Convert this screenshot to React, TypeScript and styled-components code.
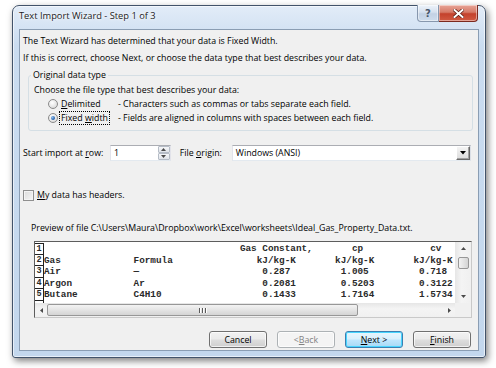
import React from "react";
import styled, { createGlobalStyle } from "styled-components";

const Global = createGlobalStyle`
  html, body { margin: 0; padding: 0; background: #ffffff; }
  body {
    width: 496px; height: 368px; overflow: hidden;
    font-family: "Open Sans", "Noto Sans", sans-serif;
    font-size: 8.8px; color: #000;
  }
`;

const Page = styled.div`
  padding: 5px 0 0 12px;
`;

const Window = styled.div`
  width: 474px;
  height: 353px;
  box-sizing: border-box;
  border: 1px solid #42536a;
  border-radius: 7px 7px 3px 3px;
  background: linear-gradient(#e2ecf8, #cadcf0 40px, #c3d7ed);
  box-shadow: 2px 3px 7px rgba(0, 0, 0, 0.5), inset 0 0 0 1px rgba(255,255,255,0.6);
  display: flex;
  flex-direction: column;
`;

const TitleBar = styled.div`
  height: 23px;
  display: flex;
  justify-content: space-between;
  align-items: flex-start;
  padding: 0 7px 0 6px;
`;

const Title = styled.div`
  padding-top: 3px;
  line-height: 14px;
  font-size: 9.3px;
  color: #1a1a1a;
  text-shadow: 0 0 4px #fff, 0 0 2px #fff;
`;

const CaptionButtons = styled.div`
  display: flex;
  margin-top: -1px;
`;

const CaptionButton = styled.div<{ $close?: boolean }>`
  height: 17px;
  width: ${(p) => (p.$close ? 39 : 22)}px;
  box-sizing: border-box;
  display: flex;
  align-items: center;
  justify-content: center;
  border: 1px solid ${(p) => (p.$close ? "#7b2a20" : "#8797ad")};
  border-top: none;
  border-left: ${(p) => (p.$close ? "none" : "1px solid #8797ad")};
  border-radius: ${(p) => (p.$close ? "0 0 4px 0" : "0 0 0 4px")};
  background: ${(p) =>
    p.$close
      ? "linear-gradient(#e8a597, #d67a68 45%, #c4412c 55%, #d15a43)"
      : "linear-gradient(#eef3fa, #d5e0ee 45%, #c2d1e4 55%, #cfdcec)"};
  box-shadow: inset 0 0 0 1px rgba(255,255,255,0.45);
  color: #48566a;
  font-family: "DejaVu Sans", sans-serif;
  font-weight: bold;
  font-size: 10px;
`;

const Client = styled.div`
  flex: 1;
  margin: 0 6px 6px 6px;
  border: 1px solid #8a9db3;
  background: #f0f0f0;
  display: flex;
  flex-direction: column;
  padding: 0 7px 0 3px;
`;

const Line = styled.div<{ $top: number; $indent?: number }>`
  line-height: 14px;
  height: 14px;
  white-space: nowrap;
  margin-top: ${(p) => p.$top}px;
  margin-left: ${(p) => p.$indent ?? 0}px;
`;

const U = styled.span`
  text-decoration: underline;
  text-underline-offset: 1px;
`;

const Group = styled.fieldset`
  margin: 3px 0 0 5px;
  width: 445px;
  box-sizing: border-box;
  border: 1px solid #d5dfe5;
  border-radius: 3px;
  padding: 1px 0 5px 5px;
  min-width: 0;
`;

const Legend = styled.legend`
  padding: 0 2px;
  margin-left: -3px;
  line-height: 14px;
  font-size: 8.8px;
`;

const RadioRow = styled.div`
  display: flex;
  align-items: center;
  height: 14px;
  padding-left: 14px;
`;

const Radio = styled.span<{ $checked?: boolean }>`
  width: 10px;
  height: 10px;
  flex: none;
  box-sizing: border-box;
  border-radius: 50%;
  border: 1px solid #8a8a8a;
  background: radial-gradient(circle at 40% 35%, #ffffff, #e4e4e4 60%, #cfcfcf);
  display: flex;
  align-items: center;
  justify-content: center;
  &::after {
    content: "";
    display: ${(p) => (p.$checked ? "block" : "none")};
    width: 4px;
    height: 4px;
    border-radius: 50%;
    background: radial-gradient(circle at 35% 35%, #8fc0f0, #1f5aa6 70%);
  }
`;

const RadioLabel = styled.span<{ $focus?: boolean }>`
  width: 51px;
  flex: none;
  box-sizing: border-box;
  line-height: 12px;
  padding: 0 1px;
  border: 1px ${(p) => (p.$focus ? "dotted #000" : "solid transparent")};
  margin-left: 1px;
`;

const Desc = styled.span`
  margin-left: 8px;
  white-space: nowrap;
`;

const ImportRow = styled.div`
  display: flex;
  align-items: center;
  height: 16px;
  margin-top: 14px;
`;

const FieldLabel = styled.span<{ $w: number; $pad?: number }>`
  width: ${(p) => p.$w}px;
  padding-left: ${(p) => p.$pad ?? 0}px;
  box-sizing: border-box;
  flex: none;
  white-space: nowrap;
`;

const SpinBox = styled.div`
  width: 61px;
  height: 16px;
  box-sizing: border-box;
  border: 1px solid #abadb3;
  border-color: #abadb3 #e2e3ea #e3e9ef #e2e3ea;
  background: #fff;
  display: flex;
  align-items: stretch;
`;

const SpinValue = styled.span`
  flex: 1;
  padding-left: 3px;
  line-height: 14px;
`;

const SpinButtons = styled.div`
  width: 12px;
  display: flex;
  flex-direction: column;
`;

const SpinButton = styled.div`
  flex: 1;
  box-sizing: border-box;
  border: 1px solid #b5bcc6;
  border-radius: 1px;
  background: linear-gradient(#f6f7f9, #dfe3e8);
  display: flex;
  align-items: center;
  justify-content: center;
`;

const Combo = styled.div`
  width: 240px;
  height: 16px;
  box-sizing: border-box;
  border: 1px solid #a9a9a9;
  border-color: #abadb3 #dbdfe6 #e3e9ef #e2e3ea;
  background: #fff;
  display: flex;
  align-items: stretch;
`;

const ComboValue = styled.span`
  flex: 1;
  padding-left: 3px;
  line-height: 14px;
`;

const DropButton = styled.div`
  width: 14px;
  box-sizing: border-box;
  border: 1px solid #7f7f7f;
  border-color: #fff #6a6a6a #6a6a6a #fff;
  box-shadow: inset -1px -1px 0 #a0a0a0;
  background: linear-gradient(#f4f4f4, #dcdcdc);
  display: flex;
  align-items: center;
  justify-content: center;
`;

const CheckRow = styled.div`
  display: flex;
  align-items: center;
  height: 14px;
  margin-top: 27px;
`;

const CheckBox = styled.span`
  width: 11px;
  height: 11px;
  box-sizing: border-box;
  border: 1px solid #8f8f8f;
  background: linear-gradient(135deg, #dcdcdc, #f6f6f6);
  box-shadow: inset 0 0 0 1px #f4f4f4;
  margin-right: 3px;
`;

const PreviewBox = styled.div`
  margin: 6px 0 0 11px;
  width: 438px;
  height: 77px;
  box-sizing: border-box;
  border: 1px solid #5d5d5d;
  border-color: #5d5d5d #c9c9c9 #c9c9c9 #5d5d5d;
  background: #fff;
  display: flex;
  flex-direction: column;
`;

const PreviewMain = styled.div`
  flex: 1;
  display: flex;
  min-height: 0;
`;

const DataArea = styled.div`
  flex: 1;
  overflow: hidden;
  padding-top: 1px;
  font-family: "Liberation Mono", "Courier New", monospace;
  font-size: 9.33px;
  font-weight: bold;
  color: #2a2a2a;
`;

const DataRow = styled.div`
  height: 11.5px;
  display: flex;
  align-items: stretch;
`;

const RulerCell = styled.div<{ $first?: boolean }>`
  width: 9px;
  flex: none;
  box-sizing: border-box;
  border-right: 1px solid #222;
  border-bottom: 1px solid #222;
  border-top: ${(p) => (p.$first ? "1px solid #222" : "none")};
  line-height: 10px;
  text-align: center;
  font-size: 8.5px;
`;

const RowText = styled.div`
  white-space: pre;
  line-height: 12px;
  padding-left: 0;
`;

const VScroll = styled.div`
  width: 16px;
  flex: none;
  background: linear-gradient(90deg, #e6e6e6, #f4f4f4 40%, #f0f0f0);
  display: flex;
  flex-direction: column;
  align-items: center;
`;

const ArrowBox = styled.div`
  height: 13px;
  width: 100%;
  display: flex;
  align-items: center;
  justify-content: center;
`;

const VThumb = styled.div`
  width: 11px;
  height: 12px;
  box-sizing: border-box;
  border: 1px solid #979797;
  border-radius: 2px;
  background: linear-gradient(90deg, #f3f3f3, #e4e4e4 50%, #d4d4d4);
  margin-top: 2px;
`;

const Spacer = styled.div`
  flex: 1;
`;

const HScrollRow = styled.div`
  height: 14px;
  display: flex;
  flex: none;
`;

const HScroll = styled.div`
  flex: 1;
  display: flex;
  align-items: center;
  background: linear-gradient(#e6e6e6, #f4f4f4 40%, #f0f0f0);
`;

const HArrow = styled.div`
  width: 12px;
  height: 100%;
  display: flex;
  align-items: center;
  justify-content: center;
`;

const HThumb = styled.div`
  width: 311px;
  height: 12px;
  box-sizing: border-box;
  border: 1px solid #979797;
  border-radius: 2px;
  background: linear-gradient(#f3f3f3, #e4e4e4 50%, #d4d4d4);
  display: flex;
  align-items: center;
  justify-content: center;
  gap: 1px;
`;

const Grip = styled.span`
  width: 1px;
  height: 5px;
  background: #5a5a5a;
  box-shadow: 1px 0 0 #fff;
  margin-right: 1px;
`;

const Corner = styled.div`
  width: 16px;
  background: #f0f0f0;
`;

const ButtonRow = styled.div`
  display: flex;
  justify-content: flex-end;
  gap: 10px;
  margin-top: 13px;
`;

const Button = styled.div<{ $disabled?: boolean; $default?: boolean }>`
  width: 58px;
  height: 17px;
  box-sizing: border-box;
  border: 1px solid ${(p) => (p.$disabled ? "#adb2b5" : p.$default ? "#3c7fb1" : "#707070")};
  border-radius: 3px;
  background: ${(p) =>
    p.$disabled
      ? "#f4f4f4"
      : p.$default
      ? "linear-gradient(#eaf6fd, #d9f0fc 45%, #bee6fd 55%, #a7d9f5)"
      : "linear-gradient(#f2f2f2, #ebebeb 45%, #dddddd 55%, #cfcfcf)"};
  box-shadow: inset 0 0 0 1px ${(p) => (p.$default ? "#48d5fe" : "rgba(255,255,255,0.7)")};
  color: ${(p) => (p.$disabled ? "#838383" : "#000")};
  display: flex;
  align-items: center;
  justify-content: center;
  line-height: 14px;
`;

type Field = [number, string];
const build = (fields: Field[]) => {
  let s = "";
  for (const [col, txt] of fields) {
    while (s.length < col) s += " ";
    s += txt;
  }
  return s;
};

const rows: string[] = [
  build([[35, "Gas Constant,"], [55, "cp"], [69, "cv"]]),
  build([[0, "Gas"], [16, "Formula"], [38, "kJ/kg-K"], [52, "kJ/kg-K"], [66, "kJ/kg-K"]]),
  build([[0, "Air"], [16, "—"], [39, "0.287"], [53, "1.005"], [67, "0.718"]]),
  build([[0, "Argon"], [16, "Ar"], [39, "0.2081"], [53, "0.5203"], [67, "0.3122"]]),
  build([[0, "Butane"], [16, "C4H10"], [39, "0.1433"], [53, "1.7164"], [67, "1.5734"]]),
  "",
];

const Tri = ({ dir, size = 5, color = "#4a4a4a" }: { dir: "up" | "down" | "left" | "right"; size?: number; color?: string }) => {
  const h = size;
  const pts =
    dir === "up"
      ? `0,${h * 0.6} ${h / 2},0 ${h},${h * 0.6}`
      : dir === "down"
      ? `0,0 ${h / 2},${h * 0.6} ${h},0`
      : dir === "left"
      ? `${h * 0.6},0 0,${h / 2} ${h * 0.6},${h}`
      : `0,0 ${h * 0.6},${h / 2} 0,${h}`;
  const w = dir === "up" || dir === "down" ? h : h * 0.6;
  const hh = dir === "up" || dir === "down" ? h * 0.6 : h;
  return (
    <svg width={w} height={hh} viewBox={`0 0 ${w} ${hh}`}>
      <polygon points={pts} fill={color} />
    </svg>
  );
};

export default function App() {
  return (
    <>
      <Global />
      <Page>
        <Window>
          <TitleBar>
            <Title>Text Import Wizard - Step 1 of 3</Title>
            <CaptionButtons>
              <CaptionButton>?</CaptionButton>
              <CaptionButton $close>
                <svg width="11" height="9" viewBox="0 0 11 9">
                  <path d="M1.5 1 L9.5 8 M9.5 1 L1.5 8" stroke="#5a1a12" strokeWidth="3.4" strokeLinecap="square" />
                  <path d="M1.5 1 L9.5 8 M9.5 1 L1.5 8" stroke="#ffffff" strokeWidth="2" strokeLinecap="square" />
                </svg>
              </CaptionButton>
            </CaptionButtons>
          </TitleBar>
          <Client>
            <Line $top={4}>The Text Wizard has determined that your data is Fixed Width.</Line>
            <Line $top={3}>If this is correct, choose Next, or choose the data type that best describes your data.</Line>
            <Group>
              <Legend>Original data type</Legend>
              <Line $top={0}>Choose the file type that best describes your data:</Line>
              <RadioRow>
                <Radio />
                <RadioLabel>
                  <U>D</U>elimited
                </RadioLabel>
                <Desc>- Characters such as commas or tabs separate each field.</Desc>
              </RadioRow>
              <RadioRow>
                <Radio $checked />
                <RadioLabel $focus>
                  Fixed <U>w</U>idth
                </RadioLabel>
                <Desc>- Fields are aligned in columns with spaces between each field.</Desc>
              </RadioRow>
            </Group>
            <ImportRow>
              <FieldLabel $w={87}>
                Start import at <U>r</U>ow:
              </FieldLabel>
              <SpinBox>
                <SpinValue>1</SpinValue>
                <SpinButtons>
                  <SpinButton>
                    <Tri dir="up" size={5} />
                  </SpinButton>
                  <SpinButton>
                    <Tri dir="down" size={5} />
                  </SpinButton>
                </SpinButtons>
              </SpinBox>
              <FieldLabel $w={61} $pad={9}>
                File <U>o</U>rigin:
              </FieldLabel>
              <Combo>
                <ComboValue>Windows (ANSI)</ComboValue>
                <DropButton>
                  <Tri dir="down" size={6} color="#000" />
                </DropButton>
              </Combo>
            </ImportRow>
            <CheckRow>
              <CheckBox />
              <span>
                <U>M</U>y data has headers.
              </span>
            </CheckRow>
            <Line $top={19} $indent={8}>
              Preview of file C:\Users\Maura\Dropbox\work\Excel\worksheets\Ideal_Gas_Property_Data.txt.
            </Line>
            <PreviewBox>
              <PreviewMain>
                <DataArea>
                  {rows.map((r, i) => (
                    <DataRow key={i}>
                      <RulerCell $first={i === 0}>{i < 5 ? i + 1 : ""}</RulerCell>
                      <RowText>{r}</RowText>
                    </DataRow>
                  ))}
                </DataArea>
                <VScroll>
                  <ArrowBox>
                    <Tri dir="up" size={5} />
                  </ArrowBox>
                  <VThumb />
                  <Spacer />
                  <ArrowBox>
                    <Tri dir="down" size={5} />
                  </ArrowBox>
                </VScroll>
              </PreviewMain>
              <HScrollRow>
                <HScroll>
                  <HArrow>
                    <Tri dir="left" size={5} />
                  </HArrow>
                  <HThumb>
                    <Grip />
                    <Grip />
                    <Grip />
                  </HThumb>
                  <Spacer />
                  <HArrow>
                    <Tri dir="right" size={5} />
                  </HArrow>
                </HScroll>
                <Corner />
              </HScrollRow>
            </PreviewBox>
            <ButtonRow>
              <Button>Cancel</Button>
              <Button $disabled>&lt; <U>B</U>ack</Button>
              <Button $default>
                <U>N</U>ext &gt;
              </Button>
              <Button>
                <U>F</U>inish
              </Button>
            </ButtonRow>
          </Client>
        </Window>
      </Page>
    </>
  );
}
